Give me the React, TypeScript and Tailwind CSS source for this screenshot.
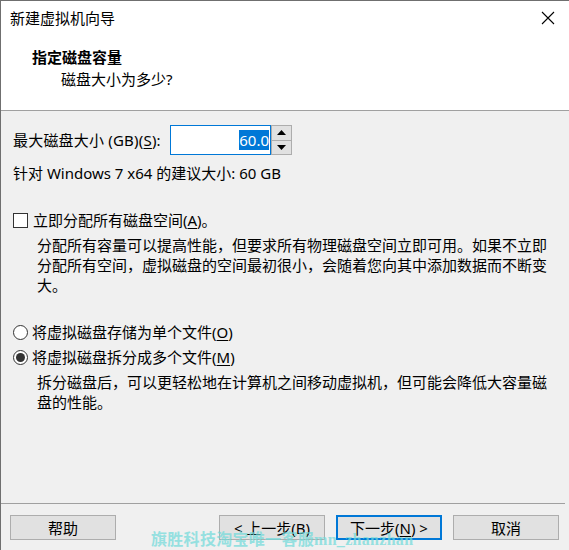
import React from "react";

const font = {
  fontFamily: '"Segoe UI", "Noto Sans", "Noto Sans CJK SC", sans-serif',
};

function U({ children }: { children: React.ReactNode }) {
  return <span className="underline underline-offset-2 decoration-1">{children}</span>;
}

function Btn({ children, primary }: { children: React.ReactNode; primary?: boolean }) {
  return (
    <div
      className={
        "w-[106px] h-[25px] flex items-center justify-center bg-[#e1e1e1] text-black " +
        (primary ? "border-2 border-[#0078d7]" : "border border-[#adadad]")
      }
    >
      {children}
    </div>
  );
}

export default function App() {
  return (
    <div
      className="relative w-[569px] h-[550px] bg-[#f0f0f0] border-l border-t border-[#6f6f6f] flex flex-col text-[15px] leading-[20px] text-black overflow-hidden"
      style={font}
    >
      {/* Header */}
      <div className="bg-white border-b border-[#a0a0a0] h-[110px] flex flex-col">
        <div className="h-[34px] flex items-center justify-between pl-[9px] pr-[14px]">
          <span>新建虚拟机向导</span>
          <svg width="14" height="14" viewBox="0 0 14 14">
            <path d="M1 1 L13 13 M13 1 L1 13" stroke="#000" strokeWidth="1.1" fill="none" />
          </svg>
        </div>
        <div className="pl-[31px] mt-[12px] font-bold">指定磁盘容量</div>
        <div className="pl-[60px] mt-[2px]">磁盘大小为多少?</div>
      </div>

      {/* Body */}
      <div className="flex-1 flex flex-col pl-[12px]">
        <div className="mt-[14px] flex items-center h-[30px]">
          <span className="w-[157px] tracking-[0.2px]">
            最大磁盘大小 (GB)(<U>S</U>):
          </span>
          <div className="flex h-[30px]">
            <div className="w-[101px] h-[30px] bg-white border border-[#0078d7] flex items-center justify-end pr-[1px]">
              <span className="bg-[#0078d7] text-white leading-[20px]">60.0</span>
            </div>
            <div className="w-[21px] h-[30px] flex flex-col border border-[#adadad] bg-[#e1e1e1]">
              <div className="flex-1 flex items-center justify-center border-b border-[#adadad]">
                <svg width="9" height="5" viewBox="0 0 9 5">
                  <path d="M0 5 L4.5 0 L9 5 Z" fill="#000" />
                </svg>
              </div>
              <div className="flex-1 flex items-center justify-center">
                <svg width="9" height="5" viewBox="0 0 9 5">
                  <path d="M0 0 L4.5 5 L9 0 Z" fill="#000" />
                </svg>
              </div>
            </div>
          </div>
        </div>
        <div className="mt-[8px]">针对 Windows 7 x64 的建议大小: 60 GB</div>

        <div className="mt-[27px] flex items-center">
          <div className="w-[15px] h-[15px] border border-[#333] bg-white mr-[5px]" />
          <span>
            立即分配所有磁盘空间(<U>A</U>)。
          </span>
        </div>
        <div className="mt-[5px] pl-[24px] flex flex-col">
          <span className="whitespace-nowrap">分配所有容量可以提高性能，但要求所有物理磁盘空间立即可用。如果不立即</span>
          <span className="whitespace-nowrap">分配所有空间，虚拟磁盘的空间最初很小，会随着您向其中添加数据而不断变</span>
          <span className="whitespace-nowrap">大。</span>
        </div>

        <div className="mt-[27px] flex items-center">
          <div className="w-[15px] h-[15px] rounded-full border border-[#333] bg-white mr-[4px]" />
          <span>
            将虚拟磁盘存储为单个文件(<U>O</U>)
          </span>
        </div>
        <div className="mt-[5px] flex items-center">
          <div className="w-[15px] h-[15px] rounded-full border border-[#333] bg-white mr-[4px] flex items-center justify-center">
            <div className="w-[9px] h-[9px] rounded-full bg-[#333]" />
          </div>
          <span>
            将虚拟磁盘拆分成多个文件(<U>M</U>)
          </span>
        </div>
        <div className="mt-[5px] pl-[24px] flex flex-col">
          <span className="whitespace-nowrap">拆分磁盘后，可以更轻松地在计算机之间移动虚拟机，但可能会降低大容量磁</span>
          <span className="whitespace-nowrap">盘的性能。</span>
        </div>
      </div>

      {/* Footer */}
      <div className="border-t border-[#a0a0a0] mr-[4px] h-[47px] flex items-start pt-[11px] pl-[9px]">
        <Btn>帮助</Btn>
        <div className="flex-1" />
        <div className="flex gap-[11px] mr-[6px]">
          <Btn>&lt; 上一步(B)</Btn>
          <Btn primary>
            <span>
              下一步(<U>N</U>) &gt;
            </span>
          </Btn>
          <Btn>取消</Btn>
        </div>
      </div>

      {/* Watermark */}
      <div
        className="absolute left-[150px] top-[529px] text-[16px] leading-[20px] font-bold text-[#6fdada] opacity-70 whitespace-nowrap pointer-events-none tracking-[0.3px]"
        style={{ fontFamily: '"Liberation Serif", "Noto Sans CJK SC", serif' }}
      >
        旗胜科技淘宝唯一客服mn_zhanzhan
      </div>
    </div>
  );
}
